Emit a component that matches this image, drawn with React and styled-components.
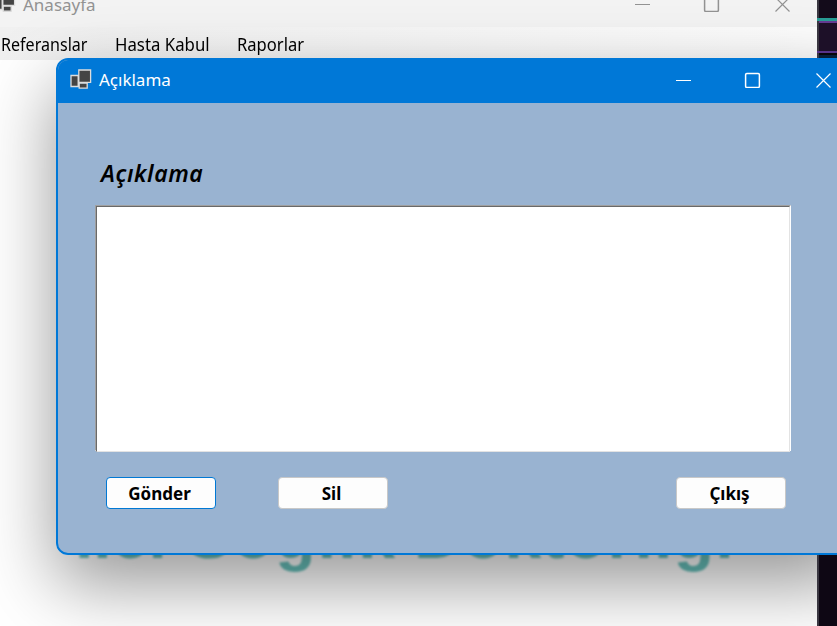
import React from "react";
import styled, { createGlobalStyle } from "styled-components";

const Global = createGlobalStyle`
  * { box-sizing: border-box; }
  body { margin: 0; overflow: hidden; font-family: "Noto Sans", sans-serif; }
  svg { display: block; flex: none; }
`;

const Desktop = styled.div`
  position: relative;
  display: flex;
  width: 837px;
  height: 626px;
  overflow: hidden;
  background: #fff;
`;

const MainWindow = styled.section`
  position: relative;
  display: flex;
  flex-direction: column;
  width: 817px;
  height: 626px;
  overflow: hidden;
  background: #fff;
`;

const MainTitle = styled.header`
  display: flex;
  align-items: flex-start;
  height: 27px;
  background: #f3f3f3;
  color: #929292;
`;

const MainIcon = styled.div`
  flex: none;
  margin: -8px 7px 0 -6px;
`;

const MainName = styled.span`
  flex: none;
  width: 612px;
  margin-top: -8px;
  font: 17px/26px "Noto Sans", sans-serif;
`;

const MainCaption = styled.div`
  flex: none;
  margin-top: -4px;
`;

const MenuBar = styled.nav`
  display: flex;
  gap: 28px;
  height: 33px;
  padding-left: 1px;
  background: linear-gradient(90deg, #f0f0f0, #fdfdfd 98%);
`;

const MenuItem = styled.span`
  width: ${(p) => p.$w}px;
  white-space: nowrap;
  font: 18px/35px "Noto Sans", sans-serif;
  color: #000;
  transform: scaleX(${(p) => p.$scale});
  transform-origin: left;
`;

const Banner = styled.div`
  position: absolute;
  left: 75px;
  top: 502px;
  display: flex;
  white-space: nowrap;
  font: 700 66px/66px "Liberation Sans", sans-serif;
  color: #68c2bc;
  filter: blur(1px);
`;

const BannerWord = styled.span`
  flex: none;
  width: ${(p) => p.$w}px;
  letter-spacing: ${(p) => p.$track}px;
`;

const Shadow = styled.div`
  position: absolute;
  left: 56px;
  top: 58px;
  width: 800px;
  height: 497px;
  border-radius: 12px;
  box-shadow: 0 28px 72px rgba(0, 0, 0, 0.42);
`;

const Editor = styled.aside`
  display: flex;
  flex-direction: column;
  width: 20px;
  height: 626px;
  border-left: 2px solid #3a3741;
  background: #0e0714;
`;

const Strip = styled.div`
  flex: none;
  height: ${(p) => p.$h}px;
  margin-left: ${(p) => (p.$wide ? -2 : 0)}px;
  background: ${(p) => p.$c};
`;

const Dialog = styled.section`
  position: absolute;
  left: 56px;
  top: 58px;
  display: flex;
  flex-direction: column;
  width: 800px;
  height: 497px;
  overflow: hidden;
  border: 2px solid #0078d7;
  border-radius: 12px;
  background: #99b3d1;
`;

const DialogTitle = styled.header`
  display: flex;
  align-items: center;
  flex: none;
  height: 43px;
  padding: 0 0 4px 12px;
  background: #0078d7;
  color: #fff;
`;

const DialogName = styled.span`
  flex: none;
  margin-left: 7px;
  width: 577px;
  font: 17px/38px "Noto Sans", sans-serif;
`;

const Heading = styled.h1`
  margin: 52px 0 0 43px;
  height: 36px;
  font: italic 600 23px/36px "Noto Sans", sans-serif;
  letter-spacing: 0.6px;
  color: #000;
`;

const TextArea = styled.div`
  flex: none;
  margin: 14px 0 0 37px;
  width: 696px;
  height: 246px;
  border: 1px solid;
  border-color: #a0a0a0 #fff #fff #a0a0a0;
  background: #fff;

  &::before {
    content: "";
    display: block;
    height: 100%;
    border: 1px solid;
    border-color: #696969 #e3e3e3 #e3e3e3 #696969;
  }
`;

const Actions = styled.div`
  display: flex;
  margin: 26px 0 0 48px;
`;

const Button = styled.button`
  flex: none;
  width: 110px;
  height: 32px;
  margin-right: ${(p) => p.$gap || 0}px;
  padding: 2px 3px 0 0;
  border: 1px solid ${(p) => (p.$focus ? "#0078d4" : "#c8c8c8")};
  border-radius: 4px;
  background: #fdfdfd;
  font: 700 17px/26px "Noto Sans", sans-serif;
  color: #000;
`;

const AppIcon = () => (
  <svg width="22" height="21" viewBox="0 0 22 21" fill="#444" stroke="#ddd" strokeWidth="1.3">
    <path d="M1 6.5h7.2v11H1zM9.2 14.2h8v5h-8zM8.8 1h11.8v12.4H8.8z" />
  </svg>
);

const Caption = ({ color }) => (
  <svg width="156" height="16" viewBox="0 0 156 16" fill="none" stroke={color} strokeWidth="1.2">
    <path d="M0 8.5h15" strokeWidth="1" />
    <rect x="69.6" y="1.6" width="13.8" height="13.8" rx="1.2" strokeWidth="1.5" />
    <path d="M140.5 1.5l14 14M154.5 1.5l-14 14" />
  </svg>
);

export default function App() {
  return (
    <Desktop>
      <Global />
      <MainWindow>
        <MainTitle>
          <MainIcon><AppIcon /></MainIcon>
          <MainName>Anasayfa</MainName>
          <MainCaption><Caption color="#929292" /></MainCaption>
        </MainTitle>
        <MenuBar>
          <MenuItem $w={86} $scale={0.893}>Referanslar</MenuItem>
          <MenuItem $w={94} $scale={0.933}>Hasta Kabul</MenuItem>
          <MenuItem $w={68} $scale={0.92}>Raporlar</MenuItem>
        </MenuBar>
        <Banner>
          <BannerWord $w={112} $track={0}>ller</BannerWord>
          <BannerWord $w={227} $track={2}>Soğlık</BannerWord>
          <BannerWord $w={330} $track={1.3}>Doktorlığı</BannerWord>
        </Banner>
        <Shadow />
      </MainWindow>
      <Editor>
        <Strip $h={18} $c="#130b1a" />
        <Strip $h={3} $c="#289b94" $wide />
        <Strip $h={2} $c="#633b91" />
        <Strip $h={28} $c="#1d1028" />
        <Strip $h={2} $c="#57338a" $wide />
        <Strip $h={2} $c="#08050b" />
        <Strip $h={3} $c="#061e38" />
      </Editor>
      <Dialog>
        <DialogTitle>
          <AppIcon />
          <DialogName>Açıklama</DialogName>
          <Caption color="#fff" />
        </DialogTitle>
        <Heading>Açıklama</Heading>
        <TextArea />
        <Actions>
          <Button $focus $gap={62}>Gönder</Button>
          <Button $gap={288}>Sil</Button>
          <Button>Çıkış</Button>
        </Actions>
      </Dialog>
    </Desktop>
  );
}
